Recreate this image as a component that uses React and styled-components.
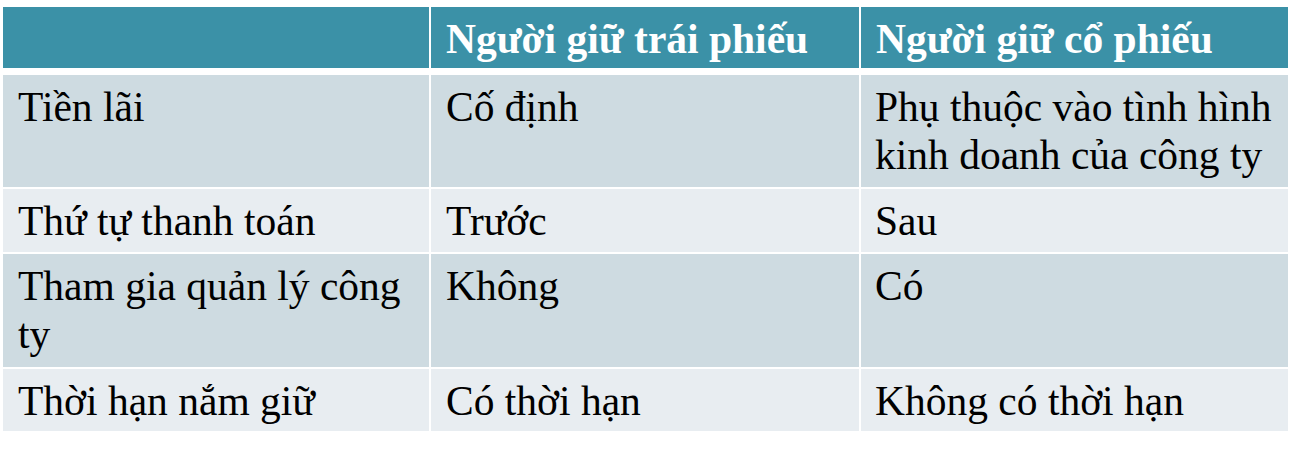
import React from "react";
import styled, { createGlobalStyle } from "styled-components";

const GlobalStyle = createGlobalStyle`
  body {
    margin: 0;
    background: #ffffff;
    font-family: "Liberation Serif", "Times New Roman", serif;
  }
`;

const Page = styled.div`
  padding: 7px 6px 0 3px;
`;

const Table = styled.div`
  display: grid;
  grid-template-columns: 426px 428px 427px;
  grid-template-rows: 66px 112px 63px 113px 62px;
  column-gap: 2px;
  row-gap: 2px;
  width: 1285px;
`;

const HeadCell = styled.div`
  background: #3b91a7;
  color: #ffffff;
  font-family: "Liberation Serif", serif;
  font-weight: bold;
  font-size: 41.5px;
  line-height: 48px;
  padding: 8px 10px 0 15px;
  margin-bottom: 5px;
`;

const Cell = styled.div`
  background: ${({ $shade }) => ($shade ? "#cedbe1" : "#e8edf1")};
  color: #000000;
  font-family: "Liberation Serif", serif;
  font-size: 41.5px;
  line-height: 48px;
  padding: 8px 10px 0 ${({ $last }) => ($last ? "14px" : "15px")};
`;

const rows = [
  ["Tiền lãi", "Cố định", "Phụ thuộc vào tình hình kinh doanh của công ty"],
  ["Thứ tự thanh toán", "Trước", "Sau"],
  ["Tham gia quản lý công ty", "Không", "Có"],
  ["Thời hạn nắm giữ", "Có thời hạn", "Không có thời hạn"],
];

export default function App() {
  return (
    <Page>
      <GlobalStyle />
      <Table>
        <HeadCell />
        <HeadCell>Người giữ trái phiếu</HeadCell>
        <HeadCell>Người giữ cổ phiếu</HeadCell>
        {rows.map((row, i) =>
          row.map((text, j) => (
            <Cell key={`${i}-${j}`} $shade={i % 2 === 0} $last={j === 2}>
              {text}
            </Cell>
          ))
        )}
      </Table>
    </Page>
  );
}
